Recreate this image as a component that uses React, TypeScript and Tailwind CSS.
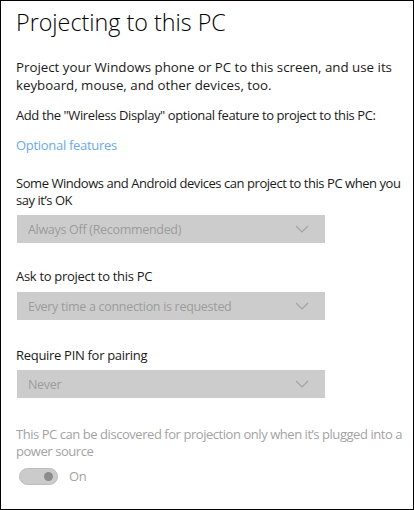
import React from "react";

const font = { fontFamily: '"Open Sans", "Noto Sans", sans-serif' };

const Chevron = () => (
  <svg width="14" height="8" viewBox="0 0 14 8" fill="none">
    <path d="M1 1l6 6 6-6" stroke="#a3a3a3" strokeWidth="1.2" />
  </svg>
);

const Select = ({ value }: { value: string }) => (
  <div className="ml-px flex h-[28px] w-[308px] items-center justify-between bg-[#cccccc] pl-[11px] pr-[16px] text-[12.5px] tracking-[-0.3px] text-[#9c9c9c]">
    <span>{value}</span>
    <Chevron />
  </div>
);

export default function App() {
  return (
    <div
      className="h-[510px] w-[414px] border border-black bg-white pl-[15px] pt-[5px] text-[13px] leading-[17px] tracking-[-0.3px] text-[#1a1a1a]"
      style={font}
    >
      <h1 className="text-[23.3px] font-light leading-[32px] tracking-normal text-black">Projecting to this PC</h1>
      <p className="mt-[20px] text-[13.3px] leading-[18px] tracking-normal">
        Project your Windows phone or PC to this screen, and use its keyboard, mouse, and other devices, too.
      </p>
      <p className="mt-[13px] tracking-[-0.4px]">Add the "Wireless Display" optional feature to project to this PC:</p>
      <p className="mt-[13px] text-[#6aaae8]">Optional features</p>
      <p className="mt-[21px] tracking-[-0.45px]">
        Some Windows and Android devices can project to this PC when you say it’s OK
      </p>
      <div className="mt-[6px]">
        <Select value="Always Off (Recommended)" />
      </div>
      <p className="mt-[25px]">Ask to project to this PC</p>
      <div className="mt-[7px]">
        <Select value="Every time a connection is requested" />
      </div>
      <p className="mt-[27px]">Require PIN for pairing</p>
      <div className="mt-[6px]">
        <Select value="Never" />
      </div>
      <p className="mt-[28px] tracking-[-0.45px] text-[#a3a3a3]">
        This PC can be discovered for projection only when it’s plugged into a power source
      </p>
      <div className="mt-[8px] flex items-center gap-[11px]">
        <div className="ml-[3px] flex h-[17px] w-[39px] items-center justify-end rounded-full border border-[#bdbdbd] bg-[#cbcbcb] pr-[4px]">
          <div className="h-[9px] w-[9px] rounded-full bg-[#8c8c8c]" />
        </div>
        <span className="text-[#a3a3a3]">On</span>
      </div>
    </div>
  );
}
